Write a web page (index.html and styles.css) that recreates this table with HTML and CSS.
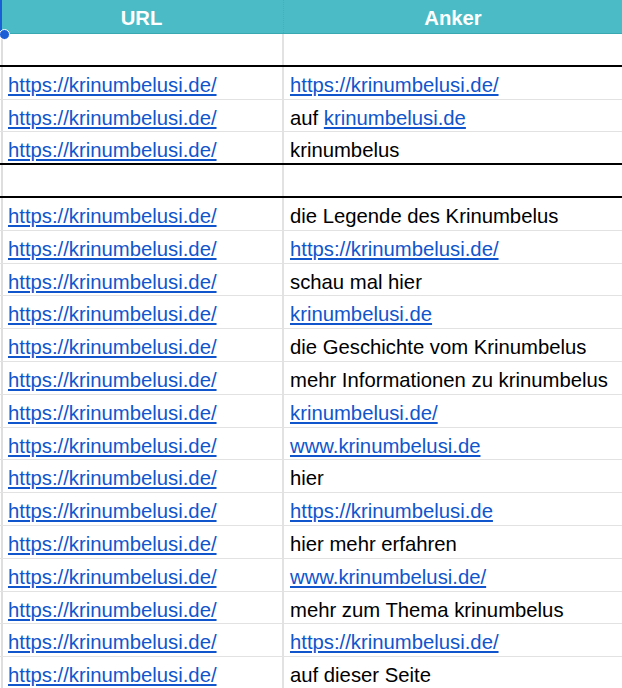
FILE: index.html
```html
<!DOCTYPE html>
<html lang="de">
<head>
<meta charset="utf-8">
<title>Sheet</title>
<link rel="stylesheet" href="styles.css">
</head>
<body>
<div class="sheet">
  <div class="row head"><div class="cell">URL</div><div class="cell">Anker</div></div>
  <div class="row thick"><div class="cell"></div><div class="cell"></div></div>
  <div class="row"><div class="cell"><a href="#">https://krinumbelusi.de/</a></div><div class="cell"><a href="#">https://krinumbelusi.de/</a></div></div>
  <div class="row"><div class="cell"><a href="#">https://krinumbelusi.de/</a></div><div class="cell">auf <a href="#">krinumbelusi.de</a></div></div>
  <div class="row thick"><div class="cell"><a href="#">https://krinumbelusi.de/</a></div><div class="cell">krinumbelus</div></div>
  <div class="row thick"><div class="cell"></div><div class="cell"></div></div>
  <div class="row"><div class="cell"><a href="#">https://krinumbelusi.de/</a></div><div class="cell">die Legende des Krinumbelus</div></div>
  <div class="row"><div class="cell"><a href="#">https://krinumbelusi.de/</a></div><div class="cell"><a href="#">https://krinumbelusi.de/</a></div></div>
  <div class="row"><div class="cell"><a href="#">https://krinumbelusi.de/</a></div><div class="cell">schau mal hier</div></div>
  <div class="row"><div class="cell"><a href="#">https://krinumbelusi.de/</a></div><div class="cell"><a href="#">krinumbelusi.de</a></div></div>
  <div class="row"><div class="cell"><a href="#">https://krinumbelusi.de/</a></div><div class="cell">die Geschichte vom Krinumbelus</div></div>
  <div class="row"><div class="cell"><a href="#">https://krinumbelusi.de/</a></div><div class="cell">mehr Informationen zu krinumbelus</div></div>
  <div class="row"><div class="cell"><a href="#">https://krinumbelusi.de/</a></div><div class="cell"><a href="#">krinumbelusi.de/</a></div></div>
  <div class="row"><div class="cell"><a href="#">https://krinumbelusi.de/</a></div><div class="cell"><a href="#">www.krinumbelusi.de</a></div></div>
  <div class="row"><div class="cell"><a href="#">https://krinumbelusi.de/</a></div><div class="cell">hier</div></div>
  <div class="row"><div class="cell"><a href="#">https://krinumbelusi.de/</a></div><div class="cell"><a href="#">https://krinumbelusi.de</a></div></div>
  <div class="row"><div class="cell"><a href="#">https://krinumbelusi.de/</a></div><div class="cell">hier mehr erfahren</div></div>
  <div class="row"><div class="cell"><a href="#">https://krinumbelusi.de/</a></div><div class="cell"><a href="#">www.krinumbelusi.de/</a></div></div>
  <div class="row"><div class="cell"><a href="#">https://krinumbelusi.de/</a></div><div class="cell">mehr zum Thema krinumbelus</div></div>
  <div class="row"><div class="cell"><a href="#">https://krinumbelusi.de/</a></div><div class="cell"><a href="#">https://krinumbelusi.de/</a></div></div>
  <div class="row"><div class="cell"><a href="#">https://krinumbelusi.de/</a></div><div class="cell">auf dieser Seite</div></div>
  <div class="sel-line"></div>
  <div class="sel-handle"></div>
</div>
</body>
</html>
```

FILE: styles.css
```css
html, body {
  margin: 0;
  padding: 0;
  background: #ffffff;
  overflow: hidden;
}
.sheet {
  position: relative;
  width: 622px;
  font-family: "Liberation Sans", Arial, sans-serif;
  font-size: 20.3px;
  color: #000;
}
.row {
  display: grid;
  grid-template-columns: 284px 1fr;
  height: 32.8px;
  box-sizing: border-box;
  border-bottom: 1px solid #e2e2e2;
}
.row.thick {
  border-bottom: 2px solid #000;
}
.cell {
  line-height: 31px;
  padding: 3px 0 0 6px;
  white-space: nowrap;
  overflow: hidden;
}
.cell:first-child {
  border-right: 2px solid #e2e2e2;
  border-left: 2px solid #dedede;
  margin-left: 1px;
  padding-left: 5px;
}
.row.head {
  height: 34px;
  background: #4bbcc5;
  border-bottom: 1px solid #3aa8b1;
}
.row.head .cell {
  text-align: center;
  color: #fff;
  font-weight: bold;
  line-height: 33px;
  padding: 2px 0 0 0;
  border-left: none;
  margin-left: 0;
}
.row.head .cell:first-child {
  border-right: 1px dotted #45b0b9;
  width: 283px;
}
a {
  color: #1155cc;
  text-decoration: underline;
  text-decoration-thickness: 1.5px;
  text-underline-offset: 2px;
}
.sel-line {
  position: absolute;
  left: 0;
  top: 0;
  width: 2px;
  height: 34px;
  background: #1a5fd6;
}
.sel-handle {
  position: absolute;
  left: -1px;
  top: 29px;
  width: 9px;
  height: 9px;
  border-radius: 50%;
  background: #1a5fd6;
  border: 1px solid #ffffff;
}
```
